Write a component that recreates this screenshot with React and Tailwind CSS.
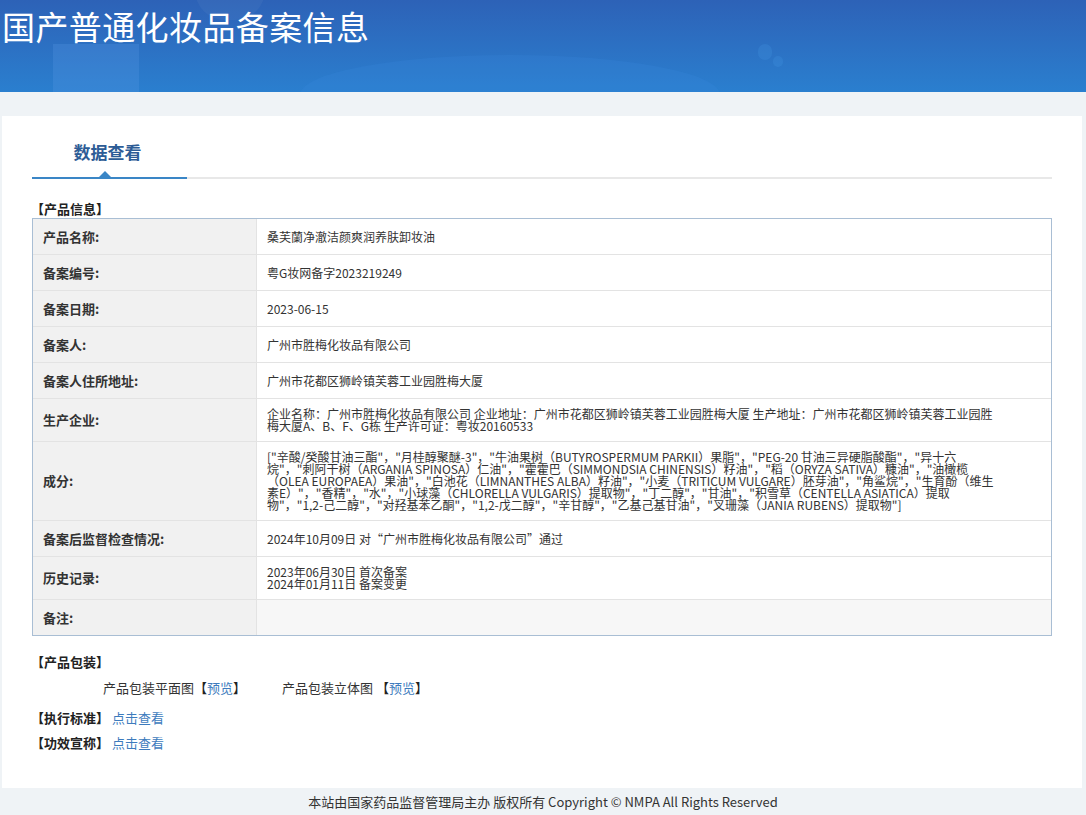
import React from "react";

const FONT = { fontFamily: '"Noto Sans CJK SC", "Microsoft YaHei", "Noto Sans", sans-serif' };

const ingredients =
  '["辛酸/癸酸甘油三酯"，"月桂醇聚醚-3"，"牛油果树（BUTYROSPERMUM PARKII）果脂"，"PEG-20 甘油三异硬脂酸酯"，"异十六烷"，"刺阿干树（ARGANIA SPINOSA）仁油"，"霍霍巴（SIMMONDSIA CHINENSIS）籽油"，"稻（ORYZA SATIVA）糠油"，"油橄榄（OLEA EUROPAEA）果油"，"白池花（LIMNANTHES ALBA）籽油"，"小麦（TRITICUM VULGARE）胚芽油"，"角鲨烷"，"生育酚（维生素E）"，"香精"，"水"，"小球藻（CHLORELLA VULGARIS）提取物"，"丁二醇"，"甘油"，"积雪草（CENTELLA ASIATICA）提取物"，"1,2-己二醇"，"对羟基苯乙酮"，"1,2-戊二醇"，"辛甘醇"，"乙基己基甘油"，"叉珊藻（JANIA RUBENS）提取物"]';

const rows = [
  { label: "产品名称:", value: "桑芙蘭净澈洁颜爽润养肤卸妆油" },
  { label: "备案编号:", value: "粤G妆网备字2023219249" },
  { label: "备案日期:", value: "2023-06-15" },
  { label: "备案人:", value: "广州市胜梅化妆品有限公司" },
  { label: "备案人住所地址:", value: "广州市花都区狮岭镇芙蓉工业园胜梅大厦" },
  {
    label: "生产企业:",
    value:
      "企业名称：广州市胜梅化妆品有限公司 企业地址：广州市花都区狮岭镇芙蓉工业园胜梅大厦 生产地址：广州市花都区狮岭镇芙蓉工业园胜梅大厦A、B、F、G栋 生产许可证：粤妆20160533",
  },
  { label: "成分:", value: ingredients },
  { label: "备案后监督检查情况:", value: "2024年10月09日 对“广州市胜梅化妆品有限公司”通过" },
  { label: "历史记录:", value: ["2023年06月30日 首次备案", "2024年01月11日 备案变更"] },
  { label: "备注:", value: "", gray: true },
];

function Row({ label, value, gray, last }) {
  return (
    <div className={`flex ${last ? "" : "border-b border-[#e3e3e3]"}`}>
      <div className="w-[224px] shrink-0 bg-[#f1f1f1] border-r border-[#e3e3e3] pl-[10px] flex items-center min-h-[35px] py-[9px]">
        <span className="text-[13px] font-bold text-[#333] leading-[14px]">{label}</span>
      </div>
      <div className={`flex-1 flex items-center min-h-[35px] py-[9px] pl-[10px] ${gray ? "bg-[#f7f7f7]" : "bg-white"}`}>
        <div className="w-[730px] text-[12px] leading-[12px] text-[#333] break-words">
          {Array.isArray(value) ? value.map((v, i) => <div key={i}>{v}</div>) : value}
        </div>
      </div>
    </div>
  );
}

export default function App() {
  return (
    <div className="w-[1086px] min-h-[815px] bg-[#eff3f6] flex flex-col" style={FONT}>
      {/* Header */}
      <div className="relative h-[92px] overflow-hidden bg-gradient-to-b from-[#2d62b7] to-[#2a7fcf]">
        <div className="absolute left-[53px] top-[44px] w-[86px] h-[60px] bg-[#5a9ae6] opacity-25" />
        <div className="absolute left-[195px] -top-[40px] w-[70px] h-[60px] rounded-full bg-white opacity-[0.04]" />
        <div className="absolute left-[300px] top-[55px] w-[420px] h-[80px] rounded-[50%] bg-[#3a8ee0] opacity-20" />
        <div className="absolute left-[758px] top-[44px] w-[14px] h-[16px] rounded-full bg-[#4aa0ea] opacity-20" />
        <div className="absolute left-[773px] top-[56px] w-[10px] h-[11px] rounded-full bg-[#4aa0ea] opacity-20" />
        <h1 className="relative pl-[2px] pt-[6px] text-[33px] leading-[40px] text-white font-normal tracking-[0.4px]">
          国产普通化妆品备案信息
        </h1>
      </div>

      {/* Panel */}
      <div className="mt-[24px] ml-[2px] mr-[4px] bg-white pl-[30px] pr-[30px] pt-[24px] h-[672px]">
        {/* Tabs */}
        <div className="flex items-end">
          <div className="relative w-[155px] flex flex-col items-center">
            <div className="text-[17px] leading-[24px] font-bold text-[#2d5c96] pb-[13px] pr-[4px]">数据查看</div>
            <div className="absolute bottom-[2px] left-[67px] w-0 h-0 border-l-[6px] border-r-[6px] border-b-[6px] border-l-transparent border-r-transparent border-b-[#3a86c6]" />
            <div className="w-full h-[2px] bg-[#3a86c6]" />
          </div>
          <div className="flex-1 h-[2px] bg-[#e8e8e8]" />
        </div>

        {/* Product info */}
        <div className="mt-[22px] text-[13px] font-bold text-[#222] leading-[16px] -ml-[1px]">【产品信息】</div>
        <div className="mt-[1px] border border-[#a9bed4]">
          {rows.map((r, i) => (
            <Row key={i} {...r} last={i === rows.length - 1} />
          ))}
        </div>

        {/* Packaging */}
        <div className="mt-[18px] text-[13px] font-bold text-[#222] leading-[16px] -ml-[1px]">【产品包装】</div>
        <div className="mt-[10px] flex text-[13px] leading-[16px] text-[#333] pl-[71px]">
          <span>
            产品包装平面图<span className="text-[#222]">【</span>
            <span className="text-[#3d7bbd]">预览</span>
            <span className="text-[#222]">】</span>
          </span>
          <span className="ml-[36px]">
            产品包装立体图 <span className="text-[#222]">【</span>
            <span className="text-[#3d7bbd]">预览</span>
            <span className="text-[#222]">】</span>
          </span>
        </div>
        <div className="mt-[14px] flex items-center text-[13px] leading-[16px] -ml-[1px]">
          <span className="font-bold text-[#222]">【执行标准】</span>
          <span className="ml-[3px] text-[#3d7bbd]">点击查看</span>
        </div>
        <div className="mt-[9px] flex items-center text-[13px] leading-[16px] -ml-[1px]">
          <span className="font-bold text-[#222]">【功效宣称】</span>
          <span className="ml-[3px] text-[#3d7bbd]">点击查看</span>
        </div>
      </div>

      {/* Footer */}
      <div className="h-[27px] flex items-center justify-center text-[13px] text-[#333]">
        本站由国家药品监督管理局主办 版权所有 Copyright © NMPA All Rights Reserved
      </div>
    </div>
  );
}
